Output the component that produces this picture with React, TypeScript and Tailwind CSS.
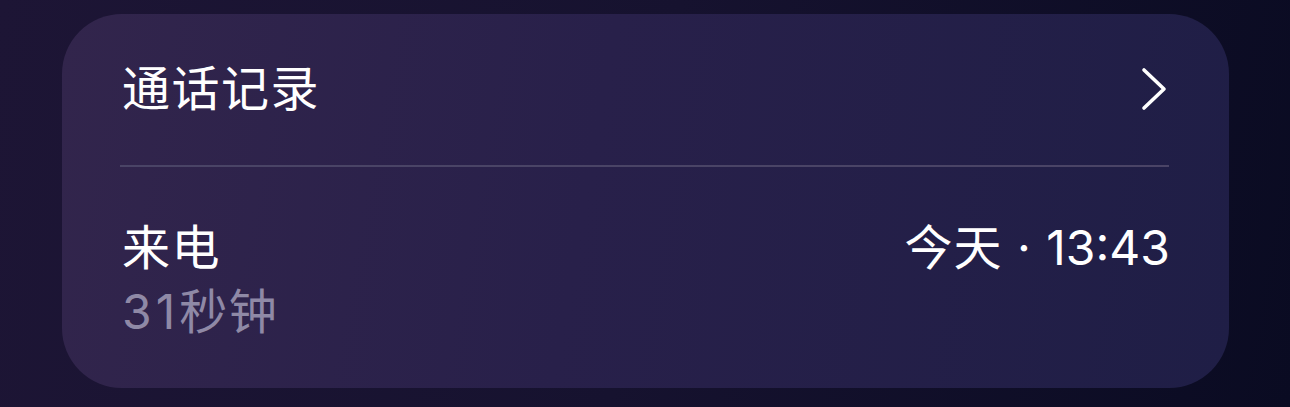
import React from "react";

export default function App() {
  return (
    <div className="w-[1290px] h-[407px] overflow-hidden bg-[linear-gradient(100deg,#1d1535_0%,#16122f_50%,#0a0b22_100%)] pt-[14px] pl-[62px]">
      <div
        className="w-[1167px] h-[374px] rounded-[60px] bg-[linear-gradient(100deg,#32254c_0%,#28204a_45%,#1f1e46_100%)] pl-[60px] pr-[60px] text-white"
        style={{ fontFamily: '"Inter", "Noto Sans CJK SC", sans-serif' }}
      >
        <div className="h-[151px] flex items-center justify-between pb-[2px]">
          <span className="text-[48px] leading-none tracking-[1.5px]">通话记录</span>
          <svg width="26" height="44" viewBox="0 0 26 44" className="mr-[2px]">
            <path d="M3 3 L23 22 L3 41" fill="none" stroke="white" strokeWidth="3.6" strokeLinecap="round" strokeLinejoin="round" />
          </svg>
        </div>
        <div className="h-[2px] bg-[#4a4466] -ml-[2px]" />
        <div className="flex justify-between pt-[49px]">
          <div className="flex flex-col">
            <span className="text-[48px] leading-[64px] tracking-[1.5px]">来电</span>
            <span className="text-[48px] leading-[64px] tracking-[1.5px] text-[#8f89a6]">
              <span className="tracking-[4px]">31</span>秒钟
            </span>
          </div>
          <span className="text-[48px] leading-[64px] tracking-[1px] -mr-[1px]">
            今天 · <span className="tracking-[0px]">13:43</span>
          </span>
        </div>
      </div>
    </div>
  );
}
